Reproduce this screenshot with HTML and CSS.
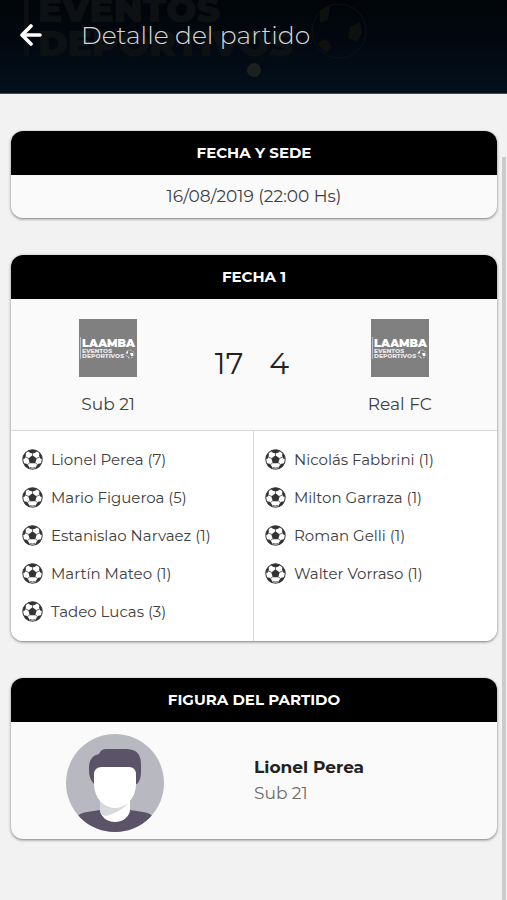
FILE: index.html
```html
<!DOCTYPE html>
<html lang="es">
<head>
<meta charset="utf-8">
<meta name="viewport" content="width=device-width, initial-scale=1">
<title>Detalle del partido</title>
<link rel="stylesheet" href="styles.css">
</head>
<body>
<svg class="defs" aria-hidden="true">
  <symbol id="ball" viewBox="0 0 40 40">
    <circle cx="20" cy="20" r="18.500" fill="#fff" stroke="#444" stroke-width="2"/>
    <g fill="#333">
      <path d="M20 12l8 6-3 9H15l-3-9z"/>
      <path d="M11 4q9-5 18 0l-4 3-5 1.500-5-1.500z"/>
      <path d="M1.500 19q0-8 5-12l1 6-2 5z"/>
      <path d="M38.500 19q0-8-5-12l-1 6 2 5z"/>
      <path d="M3 27l6 1 4 5 1 5q-8-3-11-11z"/>
      <path d="M37 27l-6 1-4 5-1 5q8-3 11-11z"/>
    </g>
    <path d="M20 13V8M27 18l7-3M25 26l5 4M15 26l-5 4M13 18l-7-3M14 35q6 2 12 0" fill="none" stroke="#555" stroke-width="1.600"/>
  </symbol>
  <symbol id="crest" viewBox="0 0 58 58">
    <path fill="#808080" d="M0 0h58v58H0z"/>
    <path fill="#bbb" d="M1 18h1v22H1z"/>
    <text class="crest-name" x="3" y="28">LAAMBA</text>
    <text class="crest-sub" x="3" y="34">EVENTOS</text>
    <text class="crest-sub" x="3" y="39">DEPORTIVOS</text>
    <circle cx="51" cy="35" r="4" fill="none" stroke="#c4c4c4" stroke-width="1" stroke-dasharray="2 1"/>
    <path fill="#fff" d="M47 33l2-1 0 2-1 1zM51 34l3 0 0 3-2 0zM48 37l2 1 0 1z"/>
  </symbol>
</svg>

<header class="topbar">
  <svg class="topbar-art" width="400" height="93" viewBox="0 0 400 93" aria-hidden="true">
    <path fill="#0b0f13" d="M24 0h5v56h-5z"/>
    <text class="art-text" x="38" y="22">EVENTOS</text>
    <text class="art-text" x="38" y="56">DEPORTIVOS</text>
    <circle cx="339" cy="31" r="27" fill="none" stroke="#0e1216" stroke-width="1"/>
    <path fill="#0f110f" d="M320 10l10-4-2 14-8 3zM350 27l10-5 2 11-5 9-9-4zM317 43l9-4 6 8-6 6z"/>
    <circle cx="254" cy="70" r="7" fill="#1c211f"/>
  </svg>
  <button class="back" type="button" aria-label="Volver">
    <svg width="22" height="22" viewBox="0 0 22 22"><path d="M11 2L2 11l9 9M3 11h17" fill="none" stroke="#fff" stroke-width="3.600" stroke-linecap="round" stroke-linejoin="round"/></svg>
  </button>
  <h1 class="title">Detalle del partido</h1>
</header>

<main class="content">
  <section class="card">
    <h2 class="card-head">FECHA Y SEDE</h2>
    <p class="date">16/08/2019 (22:00 Hs)</p>
  </section>

  <section class="card">
    <h2 class="card-head">FECHA 1</h2>
    <div class="match">
      <div class="team">
        <svg class="crest"><use href="#crest"/></svg>
        <span>Sub 21</span>
      </div>
      <div class="score"><span>17</span><span>4</span></div>
      <div class="team">
        <svg class="crest"><use href="#crest"/></svg>
        <span>Real FC</span>
      </div>
    </div>
    <div class="scorers">
      <ul class="list">
        <li><svg class="ball"><use href="#ball"/></svg>Lionel Perea (7)</li>
        <li><svg class="ball"><use href="#ball"/></svg>Mario Figueroa (5)</li>
        <li><svg class="ball"><use href="#ball"/></svg>Estanislao Narvaez (1)</li>
        <li><svg class="ball"><use href="#ball"/></svg>Martín Mateo (1)</li>
        <li><svg class="ball"><use href="#ball"/></svg>Tadeo Lucas (3)</li>
      </ul>
      <ul class="list">
        <li><svg class="ball"><use href="#ball"/></svg>Nicolás Fabbrini (1)</li>
        <li><svg class="ball"><use href="#ball"/></svg>Milton Garraza (1)</li>
        <li><svg class="ball"><use href="#ball"/></svg>Roman Gelli (1)</li>
        <li><svg class="ball"><use href="#ball"/></svg>Walter Vorraso (1)</li>
      </ul>
    </div>
  </section>

  <section class="card">
    <h2 class="card-head">FIGURA DEL PARTIDO</h2>
    <div class="figure">
      <div class="figure-photo">
        <svg width="98" height="98" viewBox="0 0 98 98" aria-hidden="true">
          <clipPath id="round"><circle cx="49" cy="49" r="49"/></clipPath>
          <g clip-path="url(#round)">
            <path fill="#b8b8c0" d="M0 0h98v98H0z"/>
            <path fill="#5b5469" d="M10 84q3-5 11-6l13-2h30l13 2q8 1 11 6v14H10z"/>
            <path fill="#fff" d="M34 66h30v9a15 13 0 0 1-30 0z"/>
            <path fill="#d7d9dc" d="M34 67q13 9 28 3-10 9-22 12-6-1-6-7z"/>
            <path fill="#5b5469" d="M28 50q-5-5-5-13v-4q0-11 10-13 2-5 7-5h20q15 0 15 15v8q0 8-4 12z"/>
            <path fill="#fff" d="M28 41q0-8 8-8h27q7 0 7 8v8q0 12-7 19-14 12-28 0-7-7-7-19z"/>
          </g>
        </svg>
      </div>
      <div class="figure-info">
        <strong>Lionel Perea</strong>
        <span>Sub 21</span>
      </div>
    </div>
  </section>
</main>
<div class="scroll-thumb" aria-hidden="true"></div>
</body>
</html>
```
FILE: styles.css
```css
* {
  box-sizing: border-box;
}

body {
  margin: 0;
  min-height: 100vh;
  background: #f2f2f2;
  color: #404040;
  font-family: Montserrat, Inter, sans-serif;
}

h1, h2, p, ul {
  margin: 0;
  padding: 0;
}

.defs {
  position: absolute;
  width: 0;
  height: 0;
}

.topbar {
  position: relative;
  display: flex;
  height: 94px;
  padding: 12px 20px;
  gap: 39px;
  overflow: hidden;
  background: linear-gradient(#010508, #020810 45%, #03101c);
  border-bottom: 1px solid #454855;
}

.topbar-art {
  position: absolute;
  top: 0;
  left: 0;
}

.art-text {
  fill: #0e1114;
  font-size: 36px;
  font-weight: 900;
}

.back {
  position: relative;
  display: flex;
  align-items: center;
  height: 46px;
  padding: 0;
  border: 0;
  background: none;
}

.title {
  position: relative;
  color: #d5d8da;
  font-size: 25px;
  font-weight: 300;
  line-height: 46px;
}

.content {
  display: flex;
  flex-direction: column;
  gap: 37px;
  padding: 37px 10px 37px 11px;
}

.card {
  overflow: hidden;
  border-radius: 12px;
  background: #fafafa;
  box-shadow: 0 1px 3px rgba(0, 0, 0, 0.5);
}

.card-head {
  background: #000;
  color: #fff;
  font-size: 15px;
  font-weight: 700;
  line-height: 44px;
  text-align: center;
}

.date {
  font-size: 17px;
  line-height: 43px;
  text-align: center;
}

.match {
  display: grid;
  grid-template-columns: 2fr 1fr 2fr;
  padding: 20px 0 14px;
}

.team {
  display: flex;
  flex-direction: column;
  align-items: center;
  gap: 15px;
  font-size: 17px;
  line-height: 24px;
}

.crest {
  width: 58px;
  height: 58px;
}

.crest-name {
  fill: #fff;
  font-size: 11px;
  font-weight: 900;
}

.crest-sub {
  fill: #e8e8e8;
  font-size: 6px;
  font-weight: 800;
}

.score {
  display: flex;
  justify-content: center;
  gap: 26px;
  padding: 26px 4px 0 0;
  color: #222;
  font-size: 30px;
  line-height: 38px;
}

.scorers {
  display: grid;
  grid-template-columns: 1fr 1fr;
  border-top: 1px solid #d8d8d8;
  background: #fff;
}

.list {
  padding: 9px 0 11px 11px;
  list-style: none;
}

.list:first-child {
  border-right: 1px solid #d8d8d8;
}

.list li {
  display: flex;
  align-items: center;
  gap: 8px;
  height: 38px;
  font-size: 15px;
}

.ball {
  flex: none;
  width: 21px;
  height: 21px;
}

.figure {
  display: grid;
  grid-template-columns: 1fr 1fr;
  align-items: center;
  padding: 12px 0 7px;
}

.figure-photo {
  display: flex;
  justify-content: center;
  padding-right: 36px;
}

.figure-info {
  display: flex;
  flex-direction: column;
  padding-bottom: 6px;
  color: #6a6a6a;
  font-size: 17px;
  line-height: 26px;
}

.figure-info strong {
  color: #222;
}

.scroll-thumb {
  position: fixed;
  top: 157px;
  right: 1px;
  bottom: 0;
  width: 4px;
  background: #cbcbcb;
}
```
